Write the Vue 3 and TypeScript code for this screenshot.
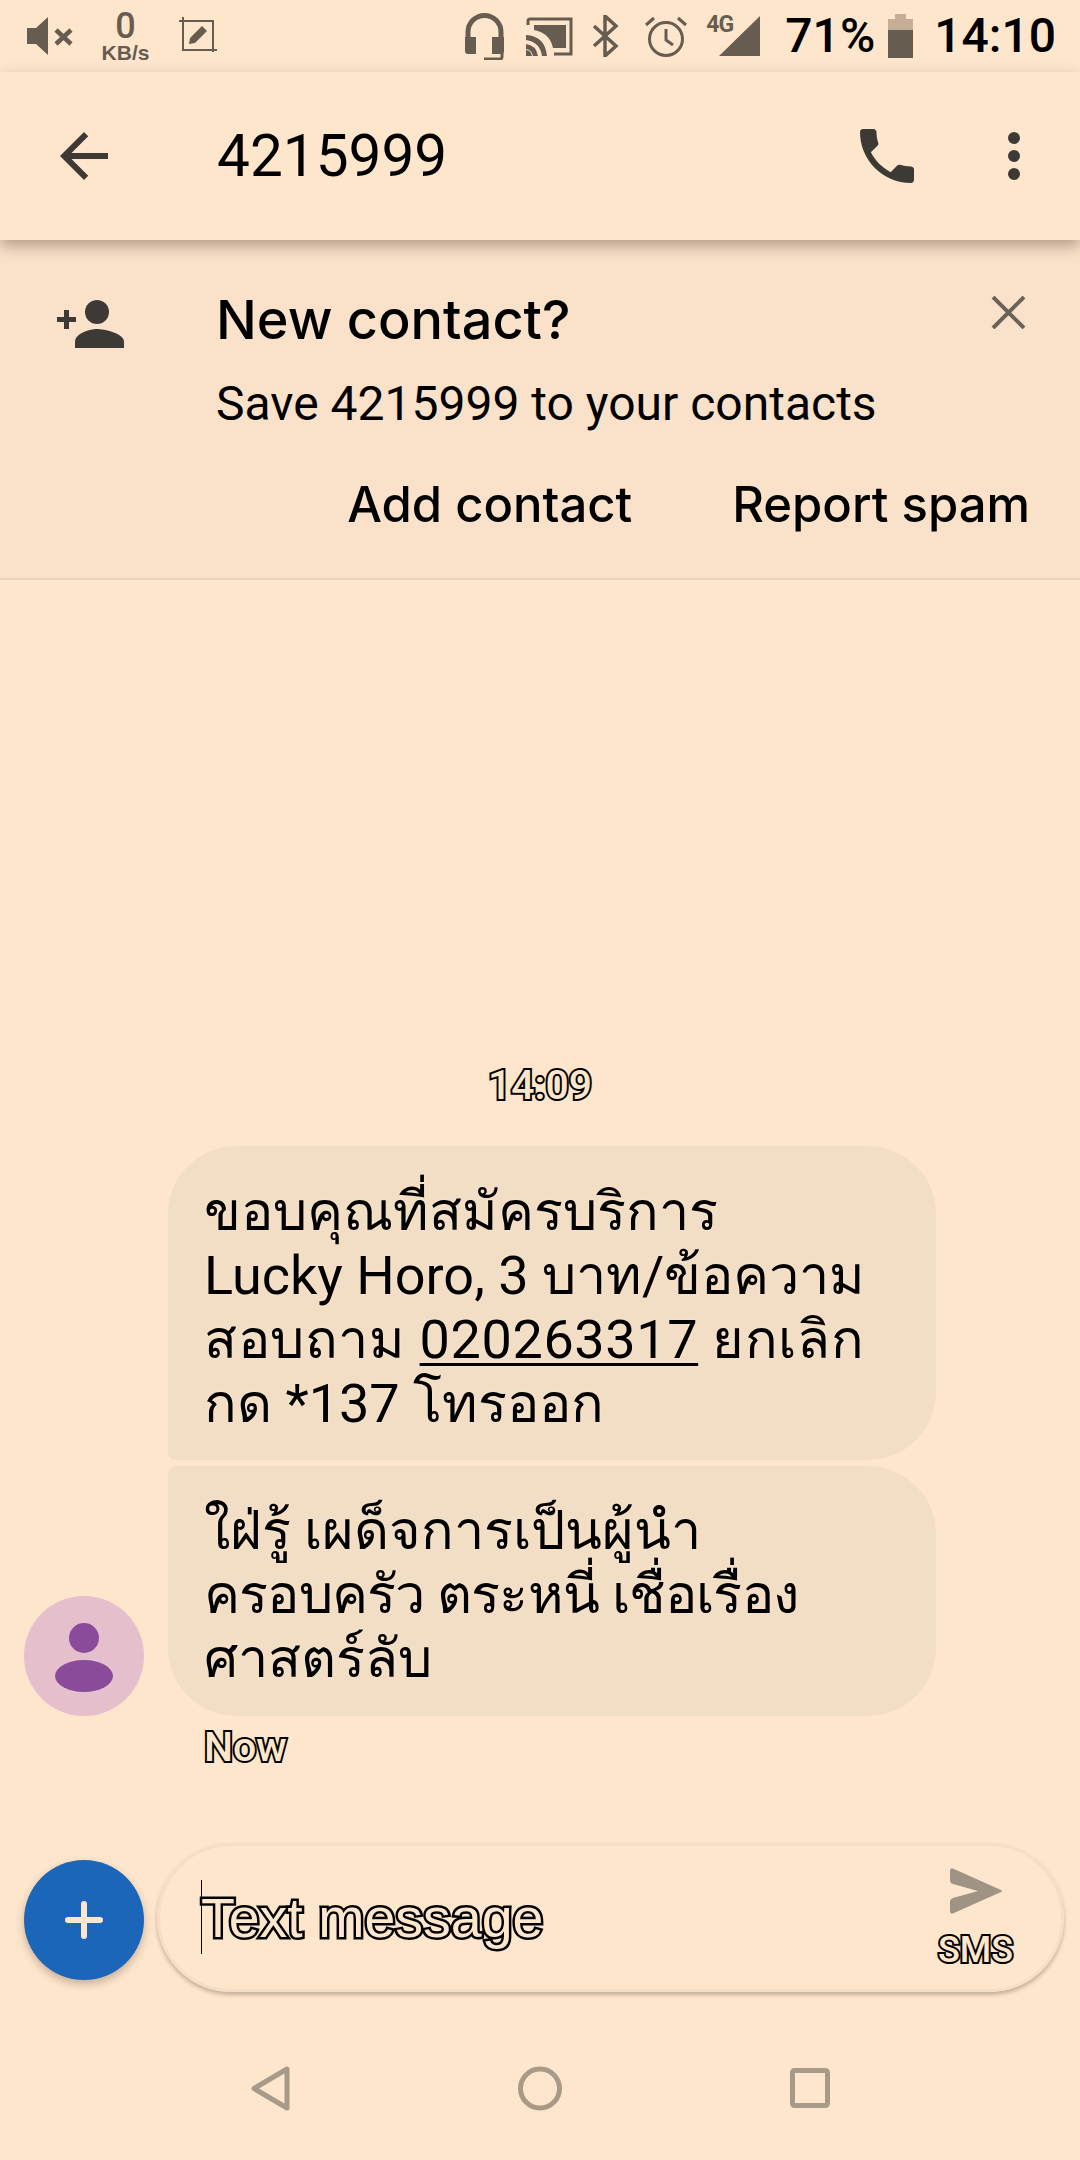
<script setup lang="ts">
const firstLines = ['ขอบคุณที่สมัครบริการ', 'Lucky Horo, 3 บาท/ข้อความ']
</script>

<template>
  <div class="screen">
    <div class="status">
      <div class="status-left">
        <svg class="ic-mute" viewBox="0 0 48 38"><path d="M0 11h9L21 0v38L9 27H0z" fill="#675c50"/><path d="M29 13l15 14M44 13L29 27" stroke="#675c50" stroke-width="4.500" fill="none"/></svg>
        <div class="speed"><span class="speed-num">0</span><span class="speed-unit">KB/s</span></div>
        <svg class="ic-shot" viewBox="0 0 38 38"><path d="M0 4h34v31M4 0v33h34" stroke="#675c50" stroke-width="2" fill="none"/><path d="M10 27l1-6 12-12 5 5-12 12z" fill="#675c50"/></svg>
      </div>
      <div class="status-right">
        <svg class="ic-headset" viewBox="0 0 39 47"><path d="M3 28V19a16.500 16.500 0 0 1 33 0v9" stroke="#675c50" stroke-width="5" fill="none"/><path d="M0 24h11v17H3q-3 0-3-3zM39 24H27v17h9q3 0 3-3z" fill="#675c50"/><path d="M37 38v6q0 2-2 2H19" stroke="#675c50" stroke-width="3" fill="none"/></svg>
        <svg class="ic-cast" viewBox="0 0 47 39"><path d="M2 8V4q0-2 2-2h41v35H28" stroke="#675c50" stroke-width="3" fill="none"/><path d="M8 8h32v23H27Q24 16 8 13z" fill="#675c50"/><path d="M0 18q19 1 21 21h-5Q14 25 0 23zM0 27q10 1 12 12H7q-1-6-7-7zM0 33q5 0 6 6H0z" fill="#675c50"/></svg>
        <svg class="ic-bt" viewBox="0 0 27 42"><path d="M2 11l22 20-11 10V1l11 10L2 31" stroke="#675c50" stroke-width="3.500" fill="none"/></svg>
        <svg class="ic-alarm" viewBox="0 0 42 41"><circle cx="21" cy="23" r="16.500" stroke="#675c50" stroke-width="3" fill="none"/><path d="M21 13v11l7 5M1 9l8-7M41 9l-8-7" stroke="#675c50" stroke-width="3" fill="none"/></svg>
        <div class="signal">
          <span class="net">4G</span>
          <svg class="ic-signal" viewBox="0 0 41 40"><path d="M41 0v40H0z" fill="#675c50"/></svg>
        </div>
        <span class="pct">71%</span>
        <div class="battery"><span class="battery-cap"></span><span class="battery-top"></span><span class="battery-fill"></span></div>
        <span class="clock">14:10</span>
      </div>
    </div>

    <header class="topbar">
      <svg class="ic-back" viewBox="0 0 24 24"><path d="M20 11H7.830l5.590-5.590L12 4l-8 8 8 8 1.410-1.410L7.830 13H20z" fill="#3d3a36"/></svg>
      <h1 class="title">4215999</h1>
      <svg class="ic-phone" viewBox="3 3 18 18"><path d="M6.620 10.790c1.440 2.830 3.760 5.140 6.590 6.590l2.200-2.200c.27-.27.67-.36 1.020-.24 1.120.37 2.330.57 3.570.57.550 0 1 .45 1 1V20c0 .55-.45 1-1 1-9.390 0-17-7.610-17-17 0-.55.45-1 1-1h3.500c.55 0 1 .45 1 1 0 1.250.2 2.450.57 3.570.11.350.03.740-.25 1.020l-2.200 2.200z" fill="#3d3a36"/></svg>
      <div class="dots"><i></i><i></i><i></i></div>
    </header>

    <section class="banner">
      <div class="banner-main">
        <svg class="ic-add" viewBox="0 0 67 48"><path d="M0 17h7V10h5v7h7v5h-7v7H7v-7H0z" fill="#3d3a36"/><ellipse cx="40" cy="12" rx="12" ry="12" fill="#3d3a36"/><path d="M18 48v-6c0-9 15-13 22-13s27 4 27 13v6z" fill="#3d3a36"/></svg>
        <div class="banner-text">
          <div class="banner-title">New contact?</div>
          <div class="banner-sub">Save 4215999 to your contacts</div>
        </div>
        <svg class="ic-close" viewBox="0 0 35 33"><path d="M2 1l31 31M33 1L2 32" stroke="#6b6359" stroke-width="4" fill="none"/></svg>
      </div>
      <div class="banner-actions">
        <span class="action">Add contact</span>
        <span class="action">Report spam</span>
      </div>
    </section>

    <main class="thread">
      <div class="stamp hc">14:09</div>
      <div class="group">
        <div class="avatar">
          <svg viewBox="0 0 120 120"><ellipse cx="60" cy="42" rx="15" ry="15" fill="#8b4b9b"/><ellipse cx="60" cy="80" rx="29" ry="16" fill="#8b4b9b"/></svg>
        </div>
        <div class="bubbles">
          <div class="bubble first">
            <div v-for="line in firstLines" :key="line">{{ line }}</div>
            <div class="wide">สอบถาม <span class="link">020263317</span> ยกเลิก</div>
            <div>กด *137 โทรออก</div>
          </div>
          <div class="bubble last">
            <div>ใฝ่รู้ เผด็จการเป็นผู้นำ</div>
            <div class="tight">ครอบครัว ตระหนี่ เชื่อเรื่อง</div>
            <div>ศาสตร์ลับ</div>
          </div>
        </div>
      </div>
      <div class="now hc">Now</div>
    </main>

    <div class="composer">
      <div class="fab">
        <svg viewBox="0 0 38 38"><path d="M19 3v32M3 19h32" stroke="#fde6cf" stroke-width="6" stroke-linecap="round"/></svg>
      </div>
      <div class="input">
        <span class="caret"></span>
        <span class="placeholder hc">Text message</span>
        <div class="send">
          <svg viewBox="0 0 55 46"><path d="M2 3q0-4 4-2l47 21q2 1 0 2L6 45q-4 2-4-2v-9q0-3 3-4l25-7-25-7q-3-1-3-4z" fill="#9e9384"/></svg>
          <span class="sms hc">SMS</span>
        </div>
      </div>
    </div>

    <nav class="navbar">
      <svg class="nav-back" viewBox="0 0 39 45"><path d="M36 3v39L3 22.500z" stroke="#a89a88" stroke-width="5" stroke-linejoin="round" fill="none"/></svg>
      <svg class="nav-home" viewBox="0 0 44 45"><circle cx="22" cy="22.500" r="19.500" stroke="#a89a88" stroke-width="5" fill="none"/></svg>
      <svg class="nav-recent" viewBox="0 0 40 40"><rect x="2.500" y="2.500" width="35" height="35" rx="2" stroke="#a89a88" stroke-width="5" fill="none"/></svg>
    </nav>
  </div>
</template>

<style scoped>
.screen {
  width: 1080px;
  height: 2160px;
  background: #fee6cd;
  display: flex;
  flex-direction: column;
  overflow: hidden;
  font-family: Roboto, "Liberation Sans", sans-serif;
  color: #000;
}
svg { display: block; flex: none; }

.status {
  height: 72px;
  flex: none;
  display: flex;
  justify-content: space-between;
  align-items: center;
  padding: 0 24px 0 27px;
}
.status-left, .status-right { display: flex; align-items: center; }
.ic-mute { width: 48px; height: 38px; }
.speed { display: flex; flex-direction: column; align-items: center; margin-left: 25px; color: #675c50; width: 51px; }
.speed-num { font-size: 36px; line-height: 34px; font-weight: 500; }
.speed-unit { font-size: 21px; line-height: 20px; font-weight: 700; font-family: "Liberation Sans", sans-serif; }
.ic-shot { width: 38px; height: 38px; margin-left: 28px; }
.ic-headset { width: 39px; height: 47px; }
.ic-cast { width: 47px; height: 39px; margin-left: 22px; }
.ic-bt { width: 27px; height: 42px; margin-left: 19px; }
.ic-alarm { width: 42px; height: 41px; margin-left: 26px; }
.signal { position: relative; width: 54px; height: 41px; margin-left: 19px; }
.net { position: absolute; left: 0; top: -3px; font-size: 23px; line-height: 24px; font-weight: 700; color: #675c50; letter-spacing: -1px; }
.ic-signal { position: absolute; right: 0; top: 0; width: 41px; height: 40px; }
.pct { font-size: 48px; font-weight: 500; line-height: 48px; margin-left: 25px; }
.battery { width: 25px; height: 44px; margin-left: 13px; display: flex; flex-direction: column; align-items: center; }
.battery-cap { width: 11px; height: 5px; background: #c5ae98; }
.battery-top { width: 25px; height: 11px; background: #c5ae98; }
.battery-fill { width: 25px; height: 28px; background: #675c50; }
.clock { font-size: 48px; font-weight: 500; line-height: 48px; margin-left: 21px; }

.topbar {
  height: 168px;
  flex: none;
  display: flex;
  align-items: center;
  background: #fee6cd;
  box-shadow: 0 6px 14px rgba(70, 50, 30, 0.38);
  position: relative;
  padding: 0 36px 0 48px;
}
.ic-back { width: 72px; height: 72px; margin-right: 97px; }
.title { margin: 0; flex: 1; font-size: 58.500px; font-weight: 400; line-height: 72px; }
.ic-phone { width: 54px; height: 54px; margin-right: 94px; }
.dots { display: flex; flex-direction: column; gap: 6px; margin-right: 24px; }
.dots i { width: 12px; height: 12px; border-radius: 50%; background: #3d3a36; }

.banner {
  height: 340px;
  flex: none;
  background: #f9e1ca;
  border-bottom: 2px solid #e8d5c0;
  box-sizing: border-box;
  padding: 48px 54px 0 57px;
}
.banner-main { display: flex; align-items: flex-start; }
.ic-add { width: 67px; height: 48px; margin-top: 12px; }
.banner-text { flex: 1; margin-left: 92px; }
.banner-title { font-size: 54px; font-weight: 500; line-height: 64px; font-family: Inter, Roboto, sans-serif; }
.banner-sub { font-size: 48px; line-height: 56px; margin-top: 24px; }
.ic-close { width: 35px; height: 33px; margin-top: 8px; }
.banner-actions { display: flex; justify-content: flex-end; gap: 100px; margin-top: 45px; margin-right: -4px; }
.action { font-size: 49px; font-weight: 500; line-height: 56px; font-family: Inter, Roboto, sans-serif; }

.thread { flex: 1; display: flex; flex-direction: column; justify-content: flex-end; min-height: 0; }
.hc {
  color: #fee6cd;
  -webkit-text-stroke: 4px #000;
  paint-order: stroke fill;
}
.stamp { text-align: center; font-size: 41px; line-height: 44px; font-weight: 500; margin-bottom: 39px; }
.group { display: flex; align-items: flex-end; padding-left: 24px; }
.avatar { width: 120px; height: 120px; border-radius: 50%; background: #e6bfcd; flex: none; }
.avatar svg { width: 120px; height: 120px; }
.bubbles { margin-left: 24px; width: 768px; display: flex; flex-direction: column; gap: 6px; }
.bubble {
  background: #f2dec5;
  padding: 0 36px;
  font-size: 54px;
  line-height: 64px;
  box-sizing: border-box;
  font-family: Roboto, "Noto Sans", sans-serif;
  text-shadow: 0 0 3px #fee6cd;
}
.bubble.first { height: 314px; padding-top: 34px; border-radius: 68px 68px 68px 8px; }
.bubble.last { height: 250px; padding-top: 33px; border-radius: 8px 68px 68px 68px; }
.wide { letter-spacing: 0.6px; }
.tight { letter-spacing: -0.8px; }
.link { text-decoration: underline; text-decoration-thickness: 3px; text-underline-offset: 5px; }
.now { font-size: 41px; line-height: 44px; font-weight: 500; padding-left: 204px; margin-top: 9px; margin-bottom: 74px; }

.composer { display: flex; align-items: center; padding: 0 16px 0 24px; height: 149px; flex: none; }
.fab {
  width: 120px;
  height: 120px;
  margin-top: 5px;
  border-radius: 50%;
  background: #1b66b8;
  box-shadow: 0 4px 8px rgba(70, 50, 30, 0.3);
  display: flex;
  align-items: center;
  justify-content: center;
  flex: none;
}
.fab svg { width: 38px; height: 38px; }
.input {
  position: relative;
  margin-left: 13px;
  flex: 1;
  height: 149px;
  box-sizing: border-box;
  border: 3px solid #f3dfc7;
  border-radius: 75px;
  box-shadow: 0 3px 4px rgba(90, 70, 50, 0.35);
  display: flex;
  align-items: center;
  justify-content: space-between;
  padding: 0 48px 0 41px;
}
.caret { position: absolute; left: 41px; top: 34px; width: 1px; height: 74px; background: #000; }
.placeholder { font-size: 55.500px; line-height: 60px; font-family: "Liberation Sans", sans-serif; -webkit-text-stroke-width: 5px; }
.send { display: flex; flex-direction: column; align-items: center; gap: 18px; }
.send svg { width: 55px; height: 46px; }
.sms { font-size: 36px; line-height: 36px; font-weight: 500; }

.navbar {
  height: 168px;
  flex: none;
  box-sizing: border-box;
  padding: 24px 0 0 251px;
  display: flex;
  align-items: center;
}
.nav-back { width: 39px; height: 45px; }
.nav-home { width: 44px; height: 45px; margin-left: 228px; }
.nav-recent { width: 40px; height: 40px; margin-left: 228px; }
</style>
